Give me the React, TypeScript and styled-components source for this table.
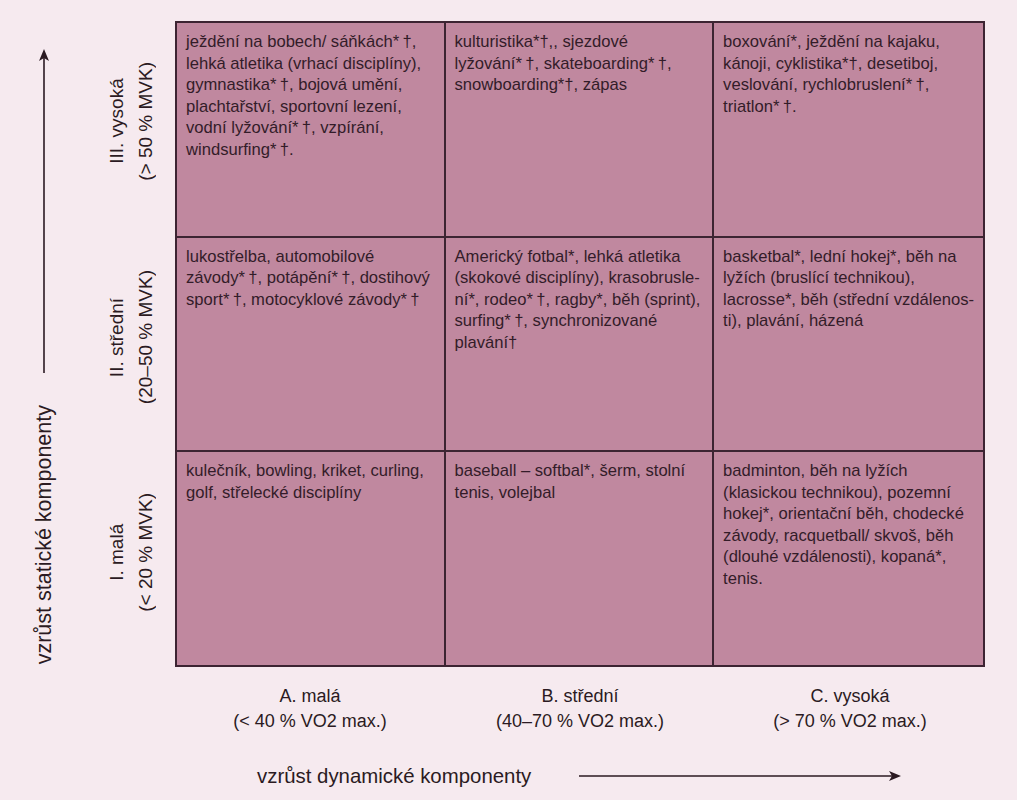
import React from 'react';
import styled, { createGlobalStyle } from 'styled-components';

const GlobalStyle = createGlobalStyle`
  html, body {
    margin: 0;
    padding: 0;
    background: #f6eaef;
  }
  body {
    font-family: "Liberation Sans", Arial, sans-serif;
    color: #2f1b26;
  }
`;

const Page = styled.div`
  width: 1017px;
  height: 800px;
  box-sizing: border-box;
  padding-top: 21px;
  display: grid;
  grid-template-columns: 88px 87px 810px;
  grid-template-rows: 646px 84px auto;
`;

const StaticAxis = styled.div`
  display: flex;
  flex-direction: column;
  align-items: center;
  padding-top: 28px;
  gap: 32px;
`;

const VerticalText = styled.div<{ size?: number }>`
  writing-mode: vertical-rl;
  transform: rotate(180deg);
  white-space: nowrap;
  text-align: center;
  font-size: ${(p) => p.size || 19}px;
  line-height: 1.5;
  color: #2b1a22;
`;

const RowLabels = styled.div`
  display: grid;
  grid-template-rows: repeat(3, 1fr);
`;

const RowLabel = styled.div`
  display: flex;
  align-items: center;
  justify-content: center;
  padding-bottom: 14px;
`;

const Matrix = styled.div`
  display: grid;
  grid-template-columns: repeat(3, 1fr);
  grid-template-rows: repeat(3, 1fr);
  gap: 2px;
  border: 2px solid #3c2432;
  background: #3c2432;
`;

const Cell = styled.div`
  background: #c0889f;
  padding: 8px 9px;
  font-size: 16.6px;
  line-height: 21.5px;
  color: #331c29;
`;

const Line = styled.span`
  display: block;
  white-space: nowrap;
`;

const ColumnLabels = styled.div`
  grid-column: 3;
  display: grid;
  grid-template-columns: repeat(3, 1fr);
  padding-top: 17px;
`;

const ColumnLabel = styled.div`
  text-align: center;
  font-size: 18px;
  line-height: 25px;
  color: #2b1a22;
`;

const DynamicAxis = styled.div`
  grid-column: 3;
  display: flex;
  align-items: center;
  padding-left: 82px;
  height: 50px;
  gap: 48px;
  font-size: 20.4px;
  color: #2b1a22;
`;

type Row = {
  label: [string, string];
  cells: string[][];
};

const rows: Row[] = [
  {
    label: ['III. vysoká', '(> 50 % MVK)'],
    cells: [
      [
        'ježdění na bobech/ sáňkách*\u2009†,',
        'lehká atletika (vrhací disciplíny),',
        'gymnastika*\u2009†, bojová umění,',
        'plachtařství, sportovní lezení,',
        'vodní lyžování*\u2009†, vzpírání,',
        'windsurfing*\u2009†.',
      ],
      [
        'kulturistika*†,, sjezdové',
        'lyžování*\u2009†, skateboarding*\u2009†,',
        'snowboarding*†, zápas',
      ],
      [
        'boxování*, ježdění na kajaku,',
        'kánoji, cyklistika*†, desetiboj,',
        'veslování, rychlobruslení*\u2009†,',
        'triatlon*\u2009†.',
      ],
    ],
  },
  {
    label: ['II. střední', '(20–50 % MVK)'],
    cells: [
      [
        'lukostřelba, automobilové',
        'závody*\u2009†, potápění*\u2009†, dostihový',
        'sport*\u2009†, motocyklové závody*\u2009†',
      ],
      [
        'Americký fotbal*, lehká atletika',
        '(skokové disciplíny), krasobrusle-',
        'ní*, rodeo*\u2009†, ragby*, běh (sprint),',
        'surfing*\u2009†, synchronizované',
        'plavání†',
      ],
      [
        'basketbal*, lední hokej*, běh na',
        'lyžích (bruslící technikou),',
        'lacrosse*, běh (střední vzdálenos-',
        'ti), plavání, házená',
      ],
    ],
  },
  {
    label: ['I. malá', '(< 20 % MVK)'],
    cells: [
      ['kulečník, bowling, kriket, curling,', 'golf, střelecké disciplíny'],
      ['baseball – softbal*, šerm, stolní', 'tenis, volejbal'],
      [
        'badminton, běh na lyžích',
        '(klasickou technikou), pozemní',
        'hokej*, orientační běh, chodecké',
        'závody, racquetball/ skvoš, běh',
        '(dlouhé vzdálenosti), kopaná*,',
        'tenis.',
      ],
    ],
  },
];

const columns: [string, string][] = [
  ['A. malá', '(< 40 % VO2 max.)'],
  ['B. střední', '(40–70 % VO2 max.)'],
  ['C. vysoká', '(> 70 % VO2 max.)'],
];

const UpArrow = () => (
  <svg width="12" height="324" viewBox="0 0 12 324">
    <line x1="6" y1="8" x2="6" y2="324" stroke="#2b1a22" strokeWidth="1.6" />
    <path d="M6 0 L11 12 L6 9 L1 12 Z" fill="#2b1a22" />
  </svg>
);

const RightArrow = () => (
  <svg width="322" height="12" viewBox="0 0 322 12">
    <line x1="0" y1="6" x2="314" y2="6" stroke="#2b1a22" strokeWidth="1.6" />
    <path d="M322 6 L310 1 L313 6 L310 11 Z" fill="#2b1a22" />
  </svg>
);

const App = () => {
  return (
    <>
      <GlobalStyle />
      <Page>
        <StaticAxis>
          <UpArrow />
          <VerticalText size={21.5}>vzrůst statické komponenty</VerticalText>
        </StaticAxis>
        <RowLabels>
          {rows.map((row) => (
            <RowLabel key={row.label[0]}>
              <VerticalText>
                {row.label[0]}
                <br />
                {row.label[1]}
              </VerticalText>
            </RowLabel>
          ))}
        </RowLabels>
        <Matrix>
          {rows.map((row) => row.cells.map((lines, i) => (
            // eslint-disable-next-line react/no-array-index-key
            <Cell key={`${row.label[0]}-${i}`}>
              {lines.map((text) => <Line key={text}>{text}</Line>)}
            </Cell>
          )))}
        </Matrix>
        <ColumnLabels>
          {columns.map(([title, range]) => (
            <ColumnLabel key={title}>
              {title}
              <br />
              {range}
            </ColumnLabel>
          ))}
        </ColumnLabels>
        <DynamicAxis>
          vzrůst dynamické komponenty
          <RightArrow />
        </DynamicAxis>
      </Page>
    </>
  );
};

export default App;
